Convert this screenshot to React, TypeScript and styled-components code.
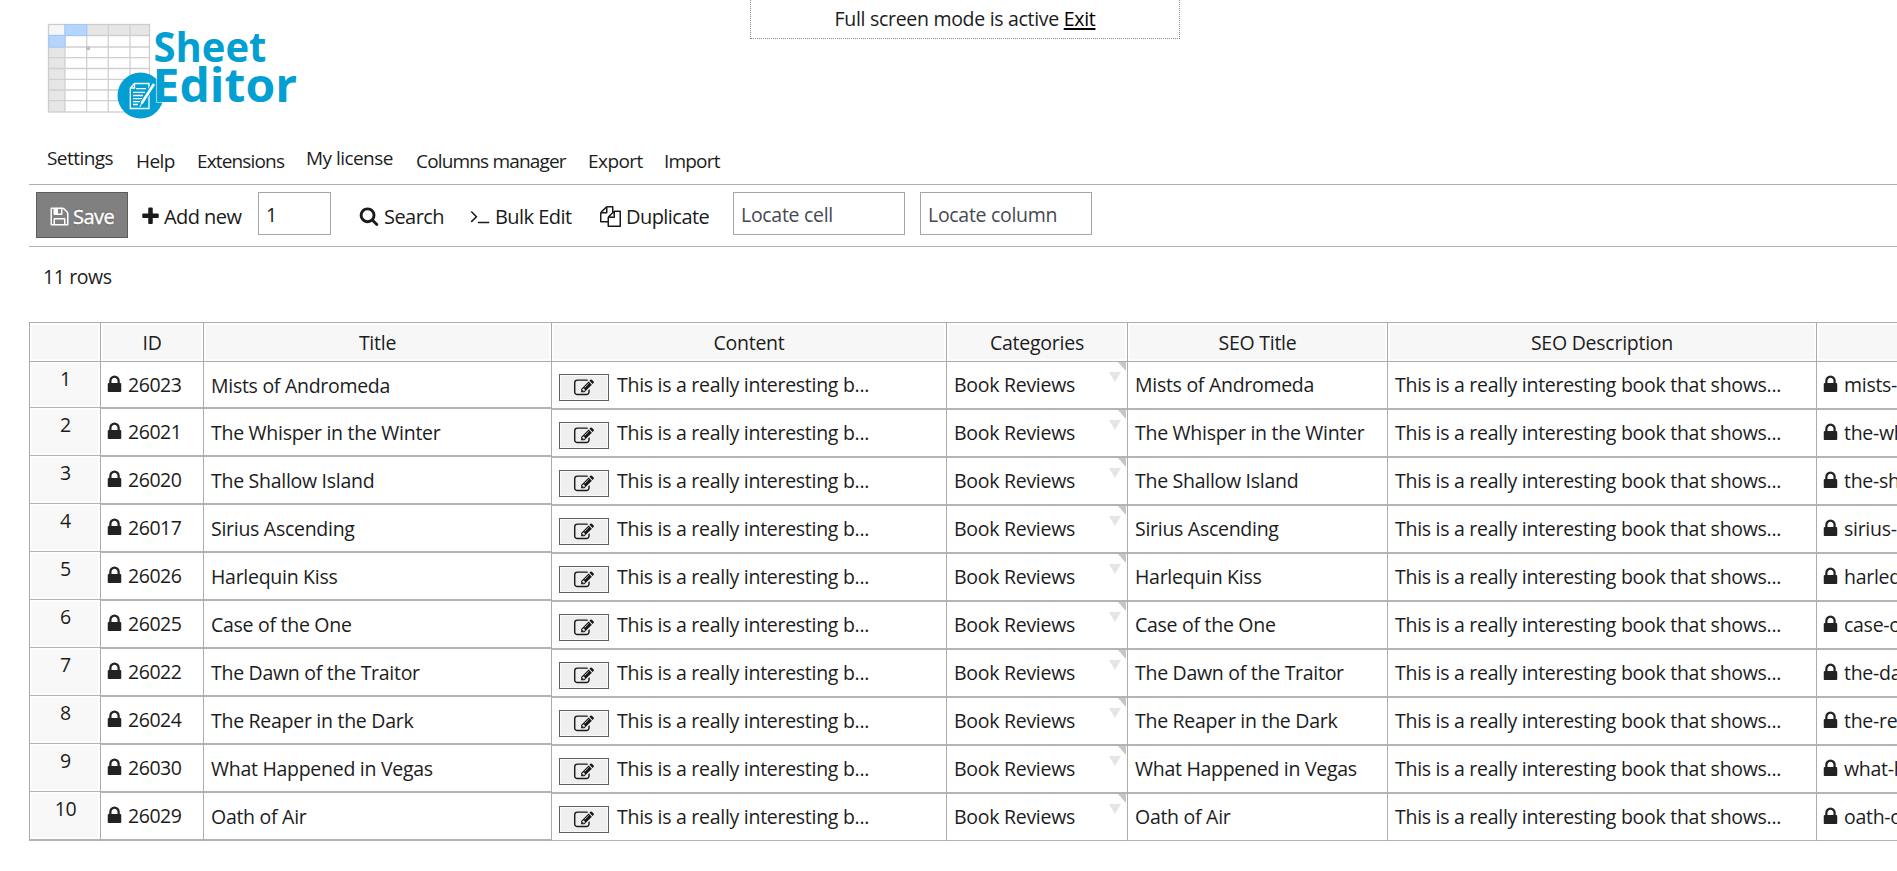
import React from "react";
import styled, { createGlobalStyle } from "styled-components";

const GlobalStyle = createGlobalStyle`
  * { box-sizing: border-box; }
  html, body { margin: 0; padding: 0; background: #fff; overflow: hidden; }
  body { font-family: "Open Sans", "Noto Sans", sans-serif; font-size: 19.5px; color: #1c1c1c; }
`;

const ICONS = {
  lock: "M640 768h512v-192q0-106-75-181t-181-75-181 75-75 181v192zm832 96v576q0 40-28 68t-68 28h-960q-40 0-68-28t-28-68v-576q0-40 28-68t68-28h32v-192q0-184 132-316t316-132 316 132 132 316v192h32q40 0 68 28t28 68z",
  search:
    "M1216 832q0-185-131.5-316.5t-316.5-131.5-316.5 131.5-131.5 316.5 131.5 316.5 316.5 131.5 316.5-131.5 131.5-316.5zm512 832q0 52-38 90t-90 38q-54 0-90-38l-343-342q-179 124-399 124-143 0-273.5-55.5t-225-150-150-225-55.5-273.5 55.5-273.5 150-225 225-150 273.5-55.5 273.5 55.5 225 150 150 225 55.5 273.5q0 220-124 399l343 343q37 37 37 90z",
  plus: "M1600 736v192q0 40-28 68t-68 28h-416v416q0 40-28 68t-68 28h-192q-40 0-68-28t-28-68v-416h-416q-40 0-68-28t-28-68v-192q0-40 28-68t68-28h416v-416q0-40 28-68t68-28h192q40 0 68 28t28 68v416h416q40 0 68 28t28 68z",
  save: "M512 1536h768v-384h-768v384zm896 0h128v-896q0-14-10-38.5t-20-34.5l-281-281q-10-10-34-20t-39-10v416q0 40-28 68t-68 28h-576q-40 0-68-28t-28-68v-416h-128v1280h128v-416q0-40 28-68t68-28h832q40 0 68 28t28 68v416zm-384-928v-320q0-13-9.5-22.5t-22.5-9.5h-192q-13 0-22.5 9.5t-9.5 22.5v320q0 13 9.5 22.5t22.5 9.5h192q13 0 22.5-9.5t9.5-22.5zm640 32v928q0 40-28 68t-68 28h-1344q-40 0-68-28t-28-68v-1344q0-40 28-68t68-28h928q40 0 88 20t76 48l280 280q28 28 48 76t20 88z",
  terminal:
    "M649 983l-466 466q-10 10-23 10t-23-10l-50-50q-10-10-10-23t10-23l393-393-393-393q-10-10-10-23t10-23l50-50q10-10 23-10t23 10l466 466q10 10 10 23t-10 23zm1079 457v64q0 14-9 23t-23 9h-960q-14 0-23-9t-9-23v-64q0-14 9-23t23-9h960q14 0 23 9t9 23z",
  copy: "M1696 384q40 0 68 28t28 68v1216q0 40-28 68t-68 28h-960q-40 0-68-28t-28-68v-288h-544q-40 0-68-28t-28-68v-672q0-40 20-88t48-76l408-408q28-28 76-48t88-20h416q40 0 68 28t28 68v328q68-40 128-40h416zm-544 213l-299 299h299v-299zm-640-384l-299 299h299v-299zm196 647l316-316v-416h-384v416q0 40-28 68t-68 28h-416v640h512v-256q0-40 20-88t48-76zm956 804v-1152h-384v416q0 40-28 68t-68 28h-416v640h896z",
  edit: "M888 1184l116-116-152-152-116 116v56h96v96h56zm440-720q-16-16-33 1l-350 350q-17 17-1 33t33-1l350-350q17-17 1-33zm80 594v190q0 119-84.5 203.5t-203.5 84.5h-832q-119 0-203.5-84.5t-84.5-203.5v-832q0-119 84.5-203.5t203.5-84.5h832q63 0 117 25 15 7 18 23 3 17-9 29l-49 49q-14 14-32 8-23-6-45-6h-832q-66 0-113 47t-47 113v832q0 66 47 113t113 47h832q66 0 113-47t47-113v-126q0-13 9-22l64-64q15-15 35-7t20 29zm-96-738l288 288-672 672h-288v-288zm444 132l-92 92-288-288 92-92q28-28 68-28t68 28l152 152q28 28 28 68t-28 68z",
};

const Glyph = ({ name, size = 20 }: { name: keyof typeof ICONS; size?: number }) => (
  <svg width={size} height={size} viewBox="0 0 1792 1792" fill="currentColor">
    <path d={ICONS[name]} />
  </svg>
);

const Page = styled.div`
  position: relative;
  width: 1897px;
  height: 871px;
  padding-left: 29px;
  overflow: hidden;
  white-space: nowrap;
`;

const Notice = styled.div`
  position: absolute;
  top: 0;
  left: 750px;
  width: 430px;
  height: 39px;
  border: 1px dotted #8c8c8c;
  border-top: 0;
  text-align: center;
  line-height: 38px;
  letter-spacing: -0.3px;
  background: #fff;
`;

const ExitLink = styled.a`
  color: #000;
  text-decoration: underline;
  text-decoration-thickness: 2px;
  text-underline-offset: 2px;
`;

const Brand = styled.header`
  height: 145px;
  svg { display: block; }
`;

const Menu = styled.nav`
  display: flex;
  height: 40px;
  padding-left: 18px;
  border-bottom: 1px solid #b0b0b0;
`;

const MenuItem = styled.a<{ $w: number; $raised?: boolean; $ls?: number }>`
  width: ${(p) => p.$w}px;
  padding-top: ${(p) => (p.$raised ? 0 : 3)}px;
  line-height: 27px;
  font-size: 19px;
  letter-spacing: ${(p) => p.$ls ?? -0.55}px;
`;

const Toolbar = styled.div`
  display: flex;
  height: 62px;
  padding: 7px 0 0 7px;
  border-bottom: 1px solid #b0b0b0;
`;

const ToolButton = styled.button<{ $w: number; $gap: number; $pad: number; $primary?: boolean }>`
  display: flex;
  align-items: center;
  gap: ${(p) => p.$gap}px;
  width: ${(p) => p.$w}px;
  height: 46px;
  padding: 2px 0 0 ${(p) => p.$pad}px;
  border: ${(p) => (p.$primary ? "1px solid #5c5c5c" : "0")};
  background: ${(p) => (p.$primary ? "#808080" : "transparent")};
  color: ${(p) => (p.$primary ? "#fff" : "#1a1a1a")};
  text-shadow: ${(p) => (p.$primary ? "0 0 2px #444" : "none")};
  -webkit-text-stroke: ${(p) => (p.$primary ? "0.4px #fff" : "0")};
  font: inherit;
  font-size: 20px;
  letter-spacing: -0.55px;
  svg { flex: none; }
`;

const Field = styled.input<{ $w: number; $ml: number }>`
  width: ${(p) => p.$w}px;
  height: 43px;
  margin-left: ${(p) => p.$ml}px;
  padding: 2px 8px 0 7px;
  border: 1px solid #a6a6a6;
  border-radius: 0;
  background: #fff;
  color: #222;
  font: inherit;
  letter-spacing: -0.3px;
  outline: none;
  &::placeholder { color: #454a50; opacity: 1; }
`;

const RowCount = styled.div`
  height: 75px;
  padding: 16px 0 0 14px;
  line-height: 27px;
  letter-spacing: -0.4px;
`;

const Sheet = styled.div`
  display: flex;
  border-left: 1px solid #acacac;
`;

type Kind = "index" | "fixed" | "main";

const Column = styled.div<{ $w: number }>`
  flex: none;
  width: ${(p) => p.$w}px;
  border-right: 1px solid #acacac;
`;

const HeadCell = styled.div`
  height: 40px;
  border: solid #acacac;
  border-width: 1px 0;
  background: #f7f7f7;
  box-shadow: inset 0 0 0 2px #fdfdfd;
  text-align: center;
  line-height: 39px;
  letter-spacing: -0.25px;
`;

const rowHeight = (kind: Kind, first: boolean, last: boolean) => {
  if (kind === "index") return first ? 46 : last ? 49 : 48;
  if (kind === "fixed") return first ? 47 : 48;
  return last ? 47 : 48;
};

const Cell = styled.div<{ $kind: Kind; $first: boolean; $last: boolean; $ls?: number }>`
  position: relative;
  display: flex;
  height: ${(p) => rowHeight(p.$kind, p.$first, p.$last)}px;
  padding-left: 7px;
  border-bottom: ${(p) =>
      (p.$kind === "index" && !p.$last) || (p.$kind === "main" && p.$last) ? 1 : 2}px
    solid #b4b4b4;
  line-height: 46px;
  letter-spacing: ${(p) => p.$ls ?? -0.28}px;
  overflow: hidden;
`;

const IndexCell = styled(Cell)`
  justify-content: center;
  padding: 0 0 0 1px;
  line-height: 33px;
  background: #f8f8f8;
  box-shadow: inset 0 0 0 2px #fdfdfd;
`;

const LockedCell = styled(Cell)`
  padding-left: 3px;
  gap: 3px;
  svg { flex: none; margin-top: 12px; color: #222; }
`;

const TitleCell = styled(Cell)`
  line-height: 48px;
`;

const EditButton = styled.button`
  display: flex;
  align-items: center;
  justify-content: center;
  width: 50px;
  height: 27px;
  margin: 12px 8px 0 0;
  padding: 0;
  border: 1px solid #606060;
  background: #efefef;
  box-shadow: inset 0 0 0 1px #fafafa;
  color: #1a1a1a;
`;

const CornerMark = styled.i`
  position: absolute;
  top: 0;
  right: 1px;
  border-style: solid;
  border-width: 0 8px 9px 0;
  border-color: transparent #c6c6c6 transparent transparent;
`;

const DropMark = styled.i`
  position: absolute;
  top: 10px;
  right: 6px;
  border-style: solid;
  border-width: 10px 6px 0 6px;
  border-color: #e6e6e6 transparent transparent transparent;
`;

const BOOKS: [string, string, string][] = [
  ["26023", "Mists of Andromeda", "mists-of-andromeda"],
  ["26021", "The Whisper in the Winter", "the-whisper-in-the-winter"],
  ["26020", "The Shallow Island", "the-shallow-island"],
  ["26017", "Sirius Ascending", "sirius-ascending"],
  ["26026", "Harlequin Kiss", "harlequin-kiss"],
  ["26025", "Case of the One", "case-of-the-one"],
  ["26022", "The Dawn of the Traitor", "the-dawn-of-the-traitor"],
  ["26024", "The Reaper in the Dark", "the-reaper-in-the-dark"],
  ["26030", "What Happened in Vegas", "what-happened-in-vegas"],
  ["26029", "Oath of Air", "oath-of-air"],
];

const Logo = () => (
  <svg width="280" height="125" viewBox="29 0 280 125">
    <rect x="48.5" y="24.5" width="101" height="87.5" fill="#fff" />
    <rect x="48.5" y="24.5" width="101" height="11" fill="#e6e6e6" />
    <rect x="48.5" y="24.5" width="16.5" height="87.5" fill="#e6e6e6" />
    <rect x="49" y="25" width="16" height="10" fill="#f6f6f6" />
    <path
      d="M65 24v88M86.7 24v88M108.3 24v88M130 24v88M48 35.5h102M48 47h102M48 57.7h102M48 68.5h102M48 79.3h102M48 90h102M48 100.7h102"
      stroke="#d0d0d0"
      strokeWidth="1.3"
    />
    <rect x="48.5" y="24.5" width="101" height="87.5" fill="none" stroke="#cdcdcd" strokeWidth="1.3" />
    <rect x="65" y="24.5" width="21.7" height="11" fill="#b5d6fc" stroke="#9cc8fb" />
    <rect x="49" y="35.5" width="16" height="11.5" fill="#b5d6fc" stroke="#9cc8fb" />
    <rect x="86.5" y="46.5" width="3.5" height="3.5" fill="#bdbdbd" />
    <circle cx="140.5" cy="95.5" r="23" fill="#039fd2" />
    <g fill="none" stroke="#fff" strokeWidth="1.3">
      <path d="M134.5 83.5H149v25h-18.7V88z" />
      <path d="M134.5 83.5v4.5h-4.2M136 88.7h10M133 92.3h12M133 95.5h10M133 98.6h9M133 101.6h7M133 104.5h5" />
      <path d="M154 84L141.5 103.5l-1.5 3.5" stroke="#039fd2" strokeWidth="4.5" />
      <path d="M154 84L141.5 103.5" strokeWidth="2.6" />
      <path d="M142 102.5l-2 4.5" strokeWidth="1" />
    </g>
    <g
      fill="#039fd2"
      stroke="#fff"
      strokeWidth="1.2"
      paintOrder="stroke"
      fontFamily="'Open Sans', sans-serif"
      fontWeight="700"
    >
      <text x="153.5" y="62" fontSize="41" textLength="113" lengthAdjust="spacingAndGlyphs">Sheet</text>
      <text x="152.5" y="102" fontSize="47" textLength="144.5" lengthAdjust="spacingAndGlyphs">Editor</text>
    </g>
  </svg>
);

const place = (i: number) => ({ $first: i === 0, $last: i === BOOKS.length - 1 });

export default function App() {
  return (
    <Page>
      <GlobalStyle />
      <Notice>
        Full screen mode is active <ExitLink>Exit</ExitLink>
      </Notice>
      <Brand>
        <Logo />
      </Brand>
      <Menu>
        <MenuItem $w={89} $raised>Settings</MenuItem>
        <MenuItem $w={61}>Help</MenuItem>
        <MenuItem $w={109} $ls={-0.85}>Extensions</MenuItem>
        <MenuItem $w={110} $raised>My license</MenuItem>
        <MenuItem $w={172} $ls={-0.83}>Columns manager</MenuItem>
        <MenuItem $w={76}>Export</MenuItem>
        <MenuItem $w={76} $ls={-0.8}>Import</MenuItem>
      </Menu>
      <Toolbar>
        <ToolButton $w={92} $gap={3} $pad={12} $primary><Glyph name="save" size={21} />Save</ToolButton>
        <ToolButton $w={122} $gap={3} $pad={12}><Glyph name="plus" size={21} />Add new</ToolButton>
        <Field $w={73} $ml={8} defaultValue="1" />
        <ToolButton $w={122} $gap={5} $pad={28}><Glyph name="search" size={20} />Search</ToolButton>
        <ToolButton $w={137} $gap={5} $pad={17}><Glyph name="terminal" size={20} />Bulk Edit</ToolButton>
        <ToolButton $w={123} $gap={5} $pad={10}><Glyph name="copy" size={21} />Duplicate</ToolButton>
        <Field $w={172} $ml={20} placeholder="Locate cell" />
        <Field $w={172} $ml={15} placeholder="Locate column" />
      </Toolbar>
      <RowCount>11 rows</RowCount>
      <Sheet>
        <Column $w={71}>
          <HeadCell />
          {BOOKS.map((b, i) => (
            <IndexCell key={b[0]} $kind="index" {...place(i)}>{i + 1}</IndexCell>
          ))}
        </Column>
        <Column $w={103}>
          <HeadCell>ID</HeadCell>
          {BOOKS.map((b, i) => (
            <LockedCell key={b[0]} $kind="fixed" $ls={-0.45} {...place(i)}><Glyph name="lock" size={21} />{b[0]}</LockedCell>
          ))}
        </Column>
        <Column $w={348}>
          <HeadCell>Title</HeadCell>
          {BOOKS.map((b, i) => (
            <TitleCell key={b[0]} $kind="fixed" {...place(i)}>{b[1]}</TitleCell>
          ))}
        </Column>
        <Column $w={395}>
          <HeadCell>Content</HeadCell>
          {BOOKS.map((b, i) => (
            <Cell key={b[0]} $kind="main" {...place(i)}>
              <EditButton><Glyph name="edit" /></EditButton>
              This is a really interesting b...
            </Cell>
          ))}
        </Column>
        <Column $w={181}>
          <HeadCell>Categories</HeadCell>
          {BOOKS.map((b, i) => (
            <Cell key={b[0]} $kind="main" {...place(i)}>
              Book Reviews
              <DropMark />
              <CornerMark />
            </Cell>
          ))}
        </Column>
        <Column $w={260}>
          <HeadCell>SEO Title</HeadCell>
          {BOOKS.map((b, i) => (
            <Cell key={b[0]} $kind="main" {...place(i)}>{b[1]}</Cell>
          ))}
        </Column>
        <Column $w={429}>
          <HeadCell>SEO Description</HeadCell>
          {BOOKS.map((b, i) => (
            <Cell key={b[0]} $kind="main" {...place(i)}>This is a really interesting book that shows...</Cell>
          ))}
        </Column>
        <Column $w={230}>
          <HeadCell />
          {BOOKS.map((b, i) => (
            <LockedCell key={b[0]} $kind="main" {...place(i)}><Glyph name="lock" size={21} />{b[2]}</LockedCell>
          ))}
        </Column>
      </Sheet>
    </Page>
  );
}
